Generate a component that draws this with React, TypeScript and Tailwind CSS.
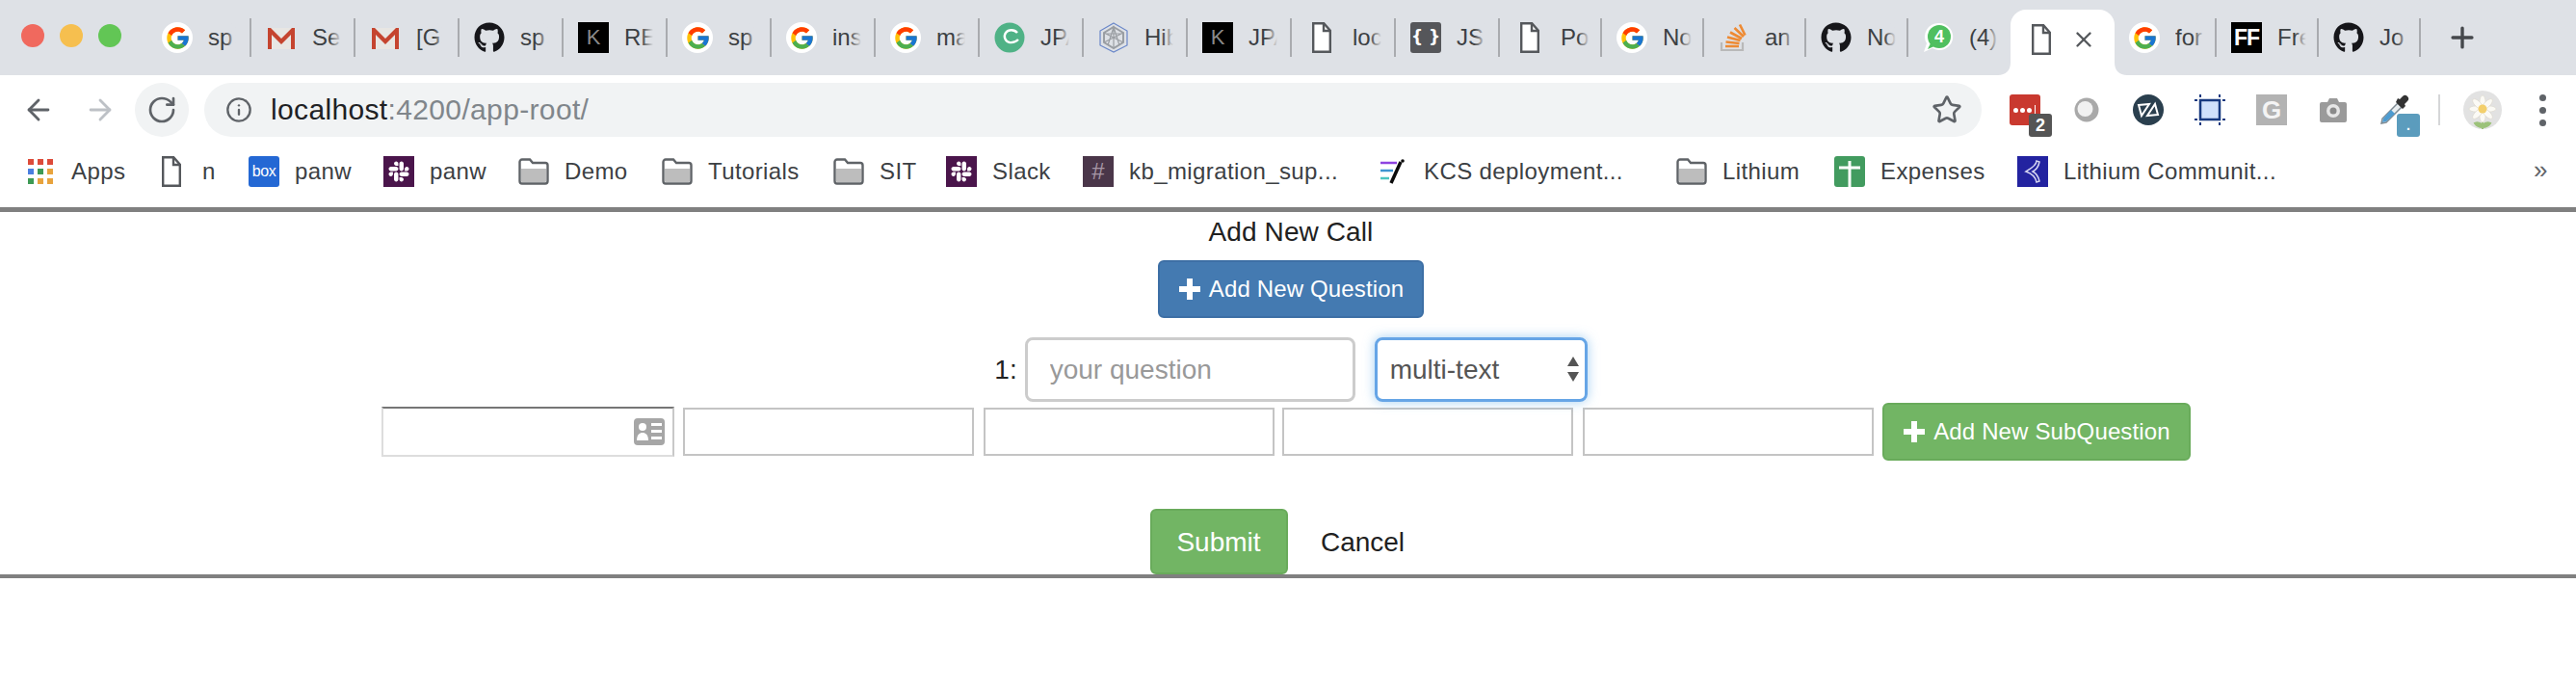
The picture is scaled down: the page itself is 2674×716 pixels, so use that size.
import { ArrowLeft, ArrowRight, RotateCw, Info, Star, Plus, X } from 'lucide-react';
import { FaGithub, FaSlack } from 'react-icons/fa';
import { FcGoogle } from 'react-icons/fc';
import type { ReactNode } from 'react';

function GoogleIcon() {
  return (
    <span className="flex h-8 w-8 items-center justify-center rounded-full bg-white">
      <FcGoogle size={27} />
    </span>
  );
}

function GmailIcon() {
  return (
    <svg width="32" height="32" viewBox="0 0 32 32">
      <path d="M2 6h28v22H2z" fill="#e8e6e3" />
      <path d="M2 6h3l11 11L27 6h3v22h-4V13l-10 10L6 13v15H2z" fill="#c5442f" />
    </svg>
  );
}

function DocIcon() {
  return (
    <svg width="20" height="32" viewBox="0 0 20 32" fill="none" stroke="#55585c" strokeWidth="2.4">
      <path d="M1.2 1.2h11l6.6 7.5v22H1.2z" fill="#fff" />
      <path d="M12 1.2v7.8h6.8" />
    </svg>
  );
}

function BlackK() {
  return (
    <span className="flex h-8 w-8 items-center justify-center bg-black text-[22px] leading-none text-[#8a8a8a]">K</span>
  );
}

function GreenC() {
  return (
    <svg width="32" height="32" viewBox="0 0 32 32">
      <circle cx="16" cy="16" r="15.5" fill="#4fb286" />
      <path d="M24 11c-3-3.5-9-4-12 0-2.500 3.500-1 9 4 10 4 .6 7-1 9-3" fill="none" stroke="#fff" strokeWidth="2.4" />
    </svg>
  );
}

function HexIcon() {
  return (
    <svg width="32" height="32" viewBox="0 0 32 32" fill="none">
      <path d="M16 1l14 8v15l-14 7-14-7V9z" stroke="#6a87c9" strokeWidth="1.2" />
      <path d="M16 5l10 6v10l-10 6-10-6V11z" stroke="#9a9ea3" strokeWidth="2" />
      <path d="M16 5v22M6 11l20 10M26 11L6 21M10 24l6-19 6 19M8 12h16" stroke="#9a9ea3" strokeWidth="1.2" />
    </svg>
  );
}

function BracesIcon() {
  return (
    <span className="flex h-8 w-8 items-center justify-center whitespace-nowrap rounded-[3px] bg-[#55565a] pb-[2px] font-['DejaVu_Sans'] text-[17px] font-bold leading-none text-white">
      {'{ }'}
    </span>
  );
}

function StackIcon() {
  return (
    <svg width="32" height="32" viewBox="0 0 32 32" fill="none">
      <path d="M3 21v8h22v-8" stroke="#b9b9b9" strokeWidth="2.200" />
      <path d="M7 25h14M7.500 20.500l14 1.500M9 15.500l13.500 3.500M12 10.500l12 6.500M16.500 6l9.500 9M22 2.500l5.500 11" stroke="#ee8a33" strokeWidth="2.600" />
    </svg>
  );
}

function WhatsAppBadge() {
  return (
    <span className="relative flex h-8 w-8 items-center justify-center">
      <svg width="32" height="32" viewBox="0 0 32 32">
        <path d="M17 1a14 14 0 11-7 26l-9 4 3-9A14 14 0 0117 1z" fill="#fff" />
        <circle cx="17" cy="15" r="12" fill="#4fbf5f" />
        <path d="M8 22l-3 6 7-3z" fill="#4fbf5f" />
      </svg>
      <span className="absolute left-[4px] top-[1px] flex h-[28px] w-[26px] items-center justify-center text-[18px] font-bold leading-none text-white">
        4
      </span>
    </span>
  );
}

function FFIcon() {
  return (
    <span className="flex h-8 w-8 items-center justify-center bg-black text-[23px] font-bold leading-none tracking-[-1px] text-white">
      FF
    </span>
  );
}

const tabs: { title: string; icon: ReactNode; wide: boolean; sep: boolean }[] = [
  { title: 'sp', icon: <GoogleIcon />, wide: true, sep: true },
  { title: 'Se', icon: <GmailIcon />, wide: true, sep: true },
  { title: '[G', icon: <GmailIcon />, wide: true, sep: true },
  { title: 'sp', icon: <FaGithub size={32} className="text-[#16161a]" />, wide: true, sep: true },
  { title: 'RE', icon: <BlackK />, wide: true, sep: true },
  { title: 'sp', icon: <GoogleIcon />, wide: true, sep: true },
  { title: 'ins', icon: <GoogleIcon />, wide: true, sep: true },
  { title: 'ma', icon: <GoogleIcon />, wide: true, sep: true },
  { title: 'JPA', icon: <GreenC />, wide: true, sep: true },
  { title: 'Hib', icon: <HexIcon />, wide: true, sep: true },
  { title: 'JPA', icon: <BlackK />, wide: true, sep: true },
  { title: 'loc', icon: <DocIcon />, wide: true, sep: true },
  { title: 'JS', icon: <BracesIcon />, wide: true, sep: true },
  { title: 'Po', icon: <DocIcon />, wide: false, sep: true },
  { title: 'No', icon: <GoogleIcon />, wide: false, sep: true },
  { title: 'an', icon: <StackIcon />, wide: false, sep: true },
  { title: 'No', icon: <FaGithub size={32} className="text-[#16161a]" />, wide: false, sep: true },
  { title: '(4)', icon: <WhatsAppBadge />, wide: false, sep: false },
];

const tabsAfter = [
  { title: 'for', icon: <GoogleIcon />, sep: true },
  { title: 'Fre', icon: <FFIcon />, sep: true },
  { title: 'Jo', icon: <FaGithub size={32} className="text-[#16161a]" />, sep: true },
];

function Tab({ title, icon, wide, sep }: { title: string; icon: ReactNode; wide: boolean; sep: boolean }) {
  return (
    <div className={`flex h-[78px] shrink-0 items-center pl-[15px] ${wide ? 'w-[108px]' : 'w-[106px]'}`}>
      <span className="flex w-8 shrink-0 justify-center">{icon}</span>
      <span className="relative ml-[16px] w-[30px] shrink-0 overflow-hidden whitespace-nowrap text-[24px] leading-8 text-[#3c4043]">
        {title}
        <span className="absolute inset-y-0 right-0 w-3 bg-linear-to-r from-transparent to-[#dee1e6]" />
      </span>
      {sep && <span className="ml-auto h-10 w-[2px] shrink-0 bg-[#a9abaf]" />}
    </div>
  );
}

function ActiveTab() {
  return (
    <div className="relative mt-[10px] flex h-[68px] w-[108px] shrink-0 items-center rounded-t-[16px] bg-white pb-[6px] pl-[22px]">
      <svg className="absolute bottom-0 left-[-13px]" width="13" height="13" viewBox="0 0 13 13">
        <path d="M13 0v13H0c8 0 13-5 13-13z" fill="#fff" />
      </svg>
      <DocIcon />
      <X size={26} strokeWidth={2.2} className="ml-[21px] text-[#55585c]" />
      <svg className="absolute bottom-0 right-[-13px]" width="13" height="13" viewBox="0 0 13 13">
        <path d="M0 0v13h13C5 13 0 8 0 0z" fill="#fff" />
      </svg>
    </div>
  );
}

function LastPassIcon() {
  return (
    <span className="relative flex h-8 w-8 items-center gap-[2px] rounded-[3px] bg-[#c9392f] pl-[4px]">
      <span className="h-[5px] w-[5px] rounded-full bg-white" />
      <span className="h-[5px] w-[5px] rounded-full bg-white" />
      <span className="h-[5px] w-[5px] rounded-full bg-white" />
      <span className="ml-[1px] h-[10px] w-[1px] bg-white" />
      <span className="absolute left-[20px] top-[20px] flex h-6 w-6 items-center justify-center rounded-[3px] bg-[#555] text-[18px] font-bold leading-none text-white">
        2
      </span>
    </span>
  );
}

function RingIcon() {
  return (
    <svg width="30" height="30" viewBox="0 0 30 30">
      <circle cx="15" cy="15" r="12.500" fill="#a9a9a9" />
      <circle cx="13.500" cy="14" r="8" fill="#f1f1f1" />
    </svg>
  );
}

function ZenIcon() {
  return (
    <svg width="32" height="32" viewBox="0 0 32 32">
      <circle cx="16" cy="16" r="16" fill="#2a3f4e" />
      <path d="M6 11l11-1-8 12zM26 21l-11 1 8-12z" fill="none" stroke="#fff" strokeWidth="2" />
    </svg>
  );
}

function CropIcon() {
  return (
    <svg width="32" height="32" viewBox="0 0 32 32">
      <rect x="6" y="6" width="20" height="20" fill="#cfe0fb" stroke="#17397f" strokeWidth="2.500" />
      <path d="M0 6h3M29 6h3M0 26h3M29 26h3M6 0v3M26 0v3M6 29v3M26 29v3" stroke="#17397f" strokeWidth="2" />
    </svg>
  );
}

function CameraIcon() {
  return (
    <svg width="30" height="28" viewBox="0 0 30 28">
      <path d="M1 8a2 2 0 012-2h6l2-4h8l2 4h6a2 2 0 012 2v17a2 2 0 01-2 2H3a2 2 0 01-2-2z" fill="#9a9a9a" />
      <circle cx="15" cy="15" r="7" fill="#e6e6e6" />
      <circle cx="15" cy="15" r="3.500" fill="#8a8a8a" />
    </svg>
  );
}

function DropperIcon() {
  return (
    <span className="relative flex h-8 w-8 items-center justify-center">
      <svg width="32" height="32" viewBox="0 0 32 32">
        <path d="M19 9L3 25l-1 5 5-1 16-16z" fill="#e8edf0" stroke="#7e8a92" strokeWidth="1.500" />
        <path d="M12 16L4 25l-1 4 4-1 9-8z" fill="#4d9bd0" />
        <path d="M17 8l7 7 3-3-1-2 3-3a3 3 0 00-5-5l-3 3-2-1z" fill="#333" />
      </svg>
      <span className="absolute left-[18px] top-[20px] flex h-6 w-6 items-center justify-center rounded-[3px] bg-[#5b9cbd] text-[14px] font-bold leading-none text-white">
        .
      </span>
    </span>
  );
}

function DaisyAvatar() {
  return (
    <svg width="40" height="40" viewBox="0 0 40 40">
      <circle cx="20" cy="20" r="20" fill="#e2e2e2" />
      <path d="M20 26c0 5 0 8 0 14M20 36c-3-3-6-3-8-2 2 3 5 4 8 4 3 0 6-1 8-4-2-1-5-1-8 2z" stroke="#9cc27a" strokeWidth="2" fill="#9cc27a" />
      <g fill="#fbfaf5" stroke="#d8d4c6" strokeWidth="0.500">
        <ellipse cx="20" cy="12" rx="3" ry="7" />
        <ellipse cx="20" cy="26" rx="3" ry="7" />
        <ellipse cx="13" cy="19" rx="7" ry="3" />
        <ellipse cx="27" cy="19" rx="7" ry="3" />
        <ellipse cx="15" cy="14" rx="3" ry="7" transform="rotate(-45 15 14)" />
        <ellipse cx="25" cy="14" rx="3" ry="7" transform="rotate(45 25 14)" />
        <ellipse cx="15" cy="24" rx="3" ry="7" transform="rotate(45 15 24)" />
        <ellipse cx="25" cy="24" rx="3" ry="7" transform="rotate(-45 25 24)" />
      </g>
      <circle cx="20" cy="19" r="4.500" fill="#f3cf6b" />
    </svg>
  );
}

function AppsIcon() {
  const colors = ['#dd4b39', '#dd4b39', '#dd4b39', '#4a7fe0', '#3d9a54', '#e8a33d', '#3d9a54', '#e8a33d', '#e8a33d'];
  return (
    <span className="grid h-[27px] w-[27px] grid-cols-3 gap-[4px]">
      {colors.map((c, i) => (
        <span key={i} className="h-[6px] w-[6px]" style={{ backgroundColor: c }} />
      ))}
    </span>
  );
}

function FolderIcon() {
  return (
    <svg width="32" height="28" viewBox="0 0 32 28">
      <path d="M1.500 4a2.500 2.500 0 012.500-2.500h8l3 3.500h13a2.500 2.500 0 012.500 2.500V24a2.500 2.500 0 01-2.500 2.500H4A2.500 2.500 0 011.500 24z" fill="#fff" stroke="#5f6367" strokeWidth="2.400" />
      <path d="M3 11h26v13a1 1 0 01-1 1H4a1 1 0 01-1-1z" fill="#bdbdbd" />
    </svg>
  );
}

function BoxIcon() {
  return (
    <span className="flex h-8 w-8 items-center justify-center rounded-[3px] bg-[#2468d4] text-[16px] leading-none tracking-[-0.5px] text-white">
      box
    </span>
  );
}

function SlackIcon() {
  return (
    <span className="flex h-8 w-8 items-center justify-center bg-[#4a154b]">
      <FaSlack size={24} className="text-white" />
    </span>
  );
}

function HashIcon() {
  return (
    <span className="flex h-8 w-8 items-center justify-center bg-[#4a3649] text-[24px] leading-none text-[#a797a6]">#</span>
  );
}

function KcsIcon() {
  return (
    <svg width="32" height="32" viewBox="0 0 32 32">
      <path d="M3 7h17" stroke="#8e44e0" strokeWidth="2.500" />
      <path d="M3 15h13" stroke="#3f95d0" strokeWidth="2.500" />
      <path d="M3 23h9" stroke="#4cc4c0" strokeWidth="2.500" />
      <path d="M24 6L14 28" stroke="#0b0b0b" strokeWidth="3.500" />
      <circle cx="26" cy="5" r="1.800" fill="#0b0b0b" />
    </svg>
  );
}

function SheetIcon() {
  return (
    <svg width="32" height="32" viewBox="0 0 32 32">
      <rect width="32" height="32" rx="3" fill="#429b5f" />
      <path d="M5 12h22M16 5v27" stroke="#fff" strokeWidth="3" />
    </svg>
  );
}

function LithiumIcon() {
  return (
    <span className="flex h-8 w-8 items-center justify-center bg-[#2323a0]">
      <svg width="24" height="26" viewBox="0 0 24 26" fill="none" stroke="#d6d6f2" strokeWidth="1.500">
        <path d="M16 2c0 4-4 7-11 11 6 2 10 6 11 11l3-1c-1-5-3-8-7-10 4-2 6-5 7-10z" />
      </svg>
    </span>
  );
}

const bookmarks: { label: string; icon: ReactNode; width: string }[] = [
  { label: 'Apps', icon: <AppsIcon />, width: 'w-[136px]' },
  { label: 'n', icon: <DocIcon />, width: 'w-[96px]' },
  { label: 'panw', icon: <BoxIcon />, width: 'w-[140px]' },
  { label: 'panw', icon: <SlackIcon />, width: 'w-[140px]' },
  { label: 'Demo', icon: <FolderIcon />, width: 'w-[149px]' },
  { label: 'Tutorials', icon: <FolderIcon />, width: 'w-[178px]' },
  { label: 'SIT', icon: <FolderIcon />, width: 'w-[117px]' },
  { label: 'Slack', icon: <SlackIcon />, width: 'w-[142px]' },
  { label: 'kb_migration_sup...', icon: <HashIcon />, width: 'w-[306px]' },
  { label: 'KCS deployment...', icon: <KcsIcon />, width: 'w-[310px]' },
  { label: 'Lithium', icon: <FolderIcon />, width: 'w-[164px]' },
  { label: 'Expenses', icon: <SheetIcon />, width: 'w-[190px]' },
  { label: 'Lithium Communit...', icon: <LithiumIcon />, width: 'w-[270px]' },
];

function Bookmark({ label, icon, width }: { label: string; icon: ReactNode; width: string }) {
  return (
    <div className={`flex shrink-0 items-center gap-[16px] whitespace-nowrap text-[24px] leading-8 tracking-[0.4px] text-[#3c4043] ${width}`}>
      <span className="flex h-8 w-8 shrink-0 items-center justify-center">{icon}</span>
      {label}
    </div>
  );
}

function GlyphPlus() {
  return (
    <svg width="24" height="24" viewBox="0 0 24 24" fill="#fff">
      <path d="M9 1h6v8h8v6h-8v8H9v-8H1V9h8z" />
    </svg>
  );
}

function ContactCard() {
  return (
    <svg width="32" height="28" viewBox="0 0 32 28">
      <rect width="32" height="28" rx="4" fill="#a6a6a6" />
      <circle cx="9" cy="9" r="4" fill="#fff" />
      <path d="M3 23c0-6 3-8 6-8s6 2 6 8z" fill="#fff" />
      <path d="M18 5h11v3H18zM18 12h11v3H18zM18 19h11v3H18z" fill="#fff" />
    </svg>
  );
}

export default function App() {
  return (
    <div className="min-h-[716px] w-[2674px] overflow-hidden bg-white font-['Liberation_Sans',Arial,sans-serif]">
      <div className="flex h-[78px] items-center bg-[#dee1e6] pl-[22px]">
        <div className="flex w-[131px] shrink-0 gap-4 self-start pt-[25px]">
          <span className="h-6 w-6 rounded-full bg-[#f0695e]" />
          <span className="h-6 w-6 rounded-full bg-[#f6bf4f]" />
          <span className="h-6 w-6 rounded-full bg-[#62c655]" />
        </div>
        {tabs.map((t, i) => (
          <Tab key={i} {...t} />
        ))}
        <ActiveTab />
        {tabsAfter.map((t, i) => (
          <Tab key={i} {...t} wide={false} />
        ))}
        <Plus size={34} strokeWidth={2.4} className="ml-[26px] text-[#45484c]" />
      </div>

      <div className="flex h-[72px] items-start pl-3 pt-2">
        <div className="flex gap-2">
          <span className="flex h-14 w-14 items-center justify-center">
            <ArrowLeft size={34} strokeWidth={2} className="text-[#5f6368]" />
          </span>
          <span className="flex h-14 w-14 items-center justify-center">
            <ArrowRight size={34} strokeWidth={2} className="text-[#bdc1c6]" />
          </span>
          <span className="flex h-14 w-14 items-center justify-center rounded-full bg-[#f1f3f4]">
            <RotateCw size={32} strokeWidth={2} className="text-[#5f6368]" />
          </span>
        </div>
        <div className="ml-4 flex h-14 w-[1845px] shrink-0 items-center rounded-full bg-[#f1f3f4] pl-[22px] pr-[20px]">
          <Info size={28} strokeWidth={2} className="text-[#5f6368]" />
          <span className="ml-[19px] text-[30px] leading-none tracking-[0.35px] text-[#202124]">
            localhost<span className="text-[#80868b]">:4200/app-root/</span>
          </span>
          <Star size={32} strokeWidth={2} className="ml-auto text-[#5f6368]" />
        </div>
        <div className="ml-[13px] flex h-14 items-center">
          <span className="flex w-16 justify-center"><LastPassIcon /></span>
          <span className="flex w-16 justify-center"><RingIcon /></span>
          <span className="flex w-16 justify-center"><ZenIcon /></span>
          <span className="flex w-16 justify-center"><CropIcon /></span>
          <span className="flex w-16 justify-center">
            <span className="flex h-8 w-8 items-center justify-center bg-[#b3b3b3] text-[26px] font-bold leading-none text-[#f4f4f4]">G</span>
          </span>
          <span className="flex w-16 justify-center"><CameraIcon /></span>
          <span className="flex w-16 justify-center"><DropperIcon /></span>
          <span className="ml-[13px] h-8 w-[2px] bg-[#d5d6d8]" />
          <span className="ml-6"><DaisyAvatar /></span>
          <span className="ml-[39px] flex flex-col gap-[6px]">
            <span className="h-[7px] w-[7px] rounded-full bg-[#5f6368]" />
            <span className="h-[7px] w-[7px] rounded-full bg-[#5f6368]" />
            <span className="h-[7px] w-[7px] rounded-full bg-[#5f6368]" />
          </span>
        </div>
      </div>

      <div className="flex h-[65px] items-start pl-[26px] pt-3">
        {bookmarks.map((b) => (
          <Bookmark key={b.label + b.width} {...b} />
        ))}
        <span className="ml-[266px] text-[26px] leading-7 text-[#5f6368]">»</span>
      </div>

      <div className="flex flex-col items-center border-y-[5px] border-b-[4px] border-t-[#808080] border-b-[#808080] pl-[6px] text-[28px] text-[#212121]">
        <div className="h-10 pt-px leading-10 tracking-[0.1px]">Add New Call</div>
        <button className="mt-[10px] flex h-[60px] w-[276px] items-center justify-center gap-2 rounded-[6px] border-2 border-[#3d6fa5] bg-[#447ab1] text-[24px] tracking-[0.15px] text-white">
          <GlyphPlus />
          Add New Question
        </button>
        <div className="mt-[20px] flex h-[67px] items-center">
          <span className="mr-2">1:</span>
          <input
            placeholder="your question"
            className="h-[67px] w-[343px] rounded-[8px] border-[3px] border-[#cccccc] bg-white px-[23px] pt-px text-[28px] outline-none placeholder:text-[#999999]"
          />
          <div className="relative ml-5 h-[67px] w-[221px] rounded-[8px] border-[3px] border-[#66a5e6] shadow-[0_0_12px_rgba(102,175,233,0.6)]">
            <select className="h-full w-full appearance-none bg-transparent pl-[13px] pt-px text-[28px] text-[#555555] outline-none">
              <option>multi-text</option>
            </select>
            <svg className="absolute right-[5px] top-[17px]" width="14" height="28" viewBox="0 0 14 28" fill="#555">
              <path d="M7 0l6 10H1zM7 26L1 16h12z" />
            </svg>
          </div>
        </div>
        <div className="mt-px flex h-[60px] items-center pr-[10px]">
          <div className="flex h-[52px] w-[304px] items-center justify-end border-2 border-[#767676] border-b-[#dddddd] border-l-[#dddddd] border-r-[#c8c8c8] border-t-[#767676] pr-[8px]">
            <ContactCard />
          </div>
          <input className="ml-[9px] h-[50px] w-[302px] border-2 border-[#c4c4c4] outline-none" />
          <input className="ml-[10px] h-[50px] w-[302px] border-2 border-[#c4c4c4] outline-none" />
          <input className="ml-2 h-[50px] w-[302px] border-2 border-[#c4c4c4] outline-none" />
          <input className="ml-[10px] h-[50px] w-[302px] border-2 border-[#c4c4c4] outline-none" />
          <button className="ml-[9px] flex h-[60px] w-[320px] items-center justify-center gap-2 rounded-[6px] border-2 border-[#69ab5b] bg-[#72b564] text-[24px] tracking-[0.15px] text-white">
            <GlyphPlus />
            Add New SubQuestion
          </button>
        </div>
        <div className="mt-[50px] flex h-[68px] items-center">
          <button className="h-[68px] w-[143px] rounded-[6px] border-2 border-[#69ab5b] bg-[#72b564] pt-px text-white">Submit</button>
          <button className="ml-[6px] w-[144px] pt-px text-center">Cancel</button>
        </div>
      </div>
    </div>
  );
}
